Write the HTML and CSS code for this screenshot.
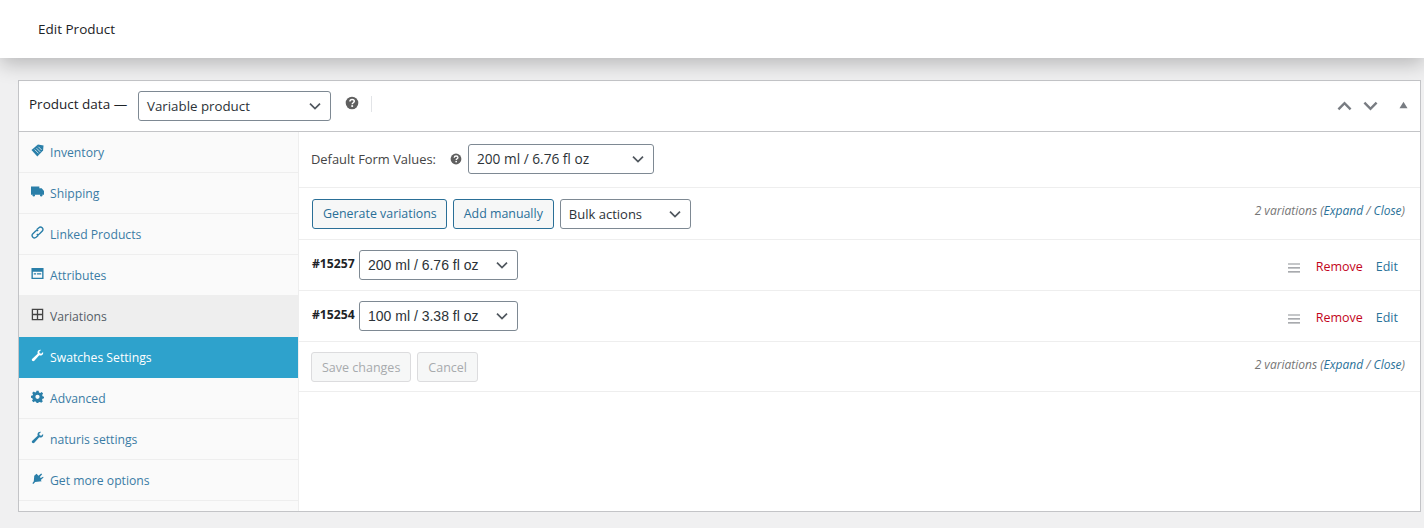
FILE: index.html
```html
<!DOCTYPE html>
<html lang="en">
<head>
<meta charset="utf-8">
<title>Edit Product</title>
<link rel="stylesheet" href="styles.css">
</head>
<body>
<svg class="defs" width="0" height="0" aria-hidden="true">
  <symbol id="chev" viewBox="0 0 14 14"><path d="M2 4.600 7 9.600 12 4.600" fill="none" stroke="currentColor" stroke-width="1.700"/></symbol>
  <symbol id="help" viewBox="0 0 14 14"><circle cx="7" cy="7" r="6.300" fill="#5f5f5f"/><path d="M4.900 5.500C5 4.100 6 3.500 7.100 3.500 8.400 3.500 9.300 4.300 9.300 5.300 9.300 6.700 7.200 6.800 7.200 8.200" fill="none" stroke="#fff" stroke-width="1.500"/><rect x="6.300" y="9.200" width="1.800" height="1.700" fill="#fff"/></symbol>
  <symbol id="wrench" viewBox="0 0 14 14"><path d="M13 3.200C13.500 5 12.600 6.600 11 7 10.200 7.200 9.500 7 8.900 6.800L3.600 12.600C2.900 13.300 1.900 13.200 1.300 12.600.7 12 .7 11 1.400 10.400L7.200 5.100C7 4.500 6.900 3.800 7.100 3 7.500 1.400 9 .5 10.800 1L8.800 3 9.400 4.600 11 5.200Z" fill="currentColor"/></symbol>
</svg>
<header class="topbar"><h1 class="title">Edit Product</h1></header>
<main class="wrap">
  <section class="box">
    <div class="boxhead">
      <span class="boxtitle">Product data —</span>
      <div class="select select-type"><span>Variable product</span><svg class="chev"><use href="#chev"/></svg></div>
      <svg class="help help-top"><use href="#help"/></svg>
      <span class="vline"></span>
      <div class="headctl">
        <svg class="ctl" viewBox="0 0 16 12"><path d="M1.500 9.500 8 3 14.500 9.500" fill="none" stroke="currentColor" stroke-width="2.600"/></svg>
        <svg class="ctl" viewBox="0 0 16 12"><path d="M1.500 2.500 8 9 14.500 2.500" fill="none" stroke="currentColor" stroke-width="2.600"/></svg>
        <svg class="ctl-tri" viewBox="0 0 10 8"><path d="M5 .5 9.500 7.500H.5Z" fill="currentColor"/></svg>
      </div>
    </div>
    <div class="boxbody">
      <nav class="tabs">
        <a class="tab"><svg class="ico" viewBox="0 0 14 14"><path d="M.5 6.500 7.500.5 13.500 1.500 13 7 6.800 13.500Z" fill="currentColor"/><path d="M4 6 8 10M6 4.500 10 8.500M8 3 11.500 6.500" stroke="#fafafa" stroke-width=".8"/></svg><span>Inventory</span></a>
        <a class="tab"><svg class="ico" viewBox="0 0 14 14"><path d="M0 1.500H9V3.500H11.500L14 6.500V10.500H0Z" fill="currentColor"/><circle cx="3" cy="11" r="1.300" fill="currentColor"/><circle cx="11" cy="11" r="1.300" fill="currentColor"/></svg><span>Shipping</span></a>
        <a class="tab"><svg class="ico" viewBox="0 0 14 14"><path d="M6 4 8.500 1.800C9.500 1 11 1 12 2 13 3 13 4.500 12.200 5.500L9 8.700C8 9.500 7 9.400 6.200 8.800M8 10 5.500 12.200C4.500 13 3 13 2 12 1 11 1 9.500 1.800 8.500L5 5.300C6 4.500 7 4.600 7.800 5.200" fill="none" stroke="currentColor" stroke-width="1.500"/></svg><span>Linked Products</span></a>
        <a class="tab"><svg class="ico" viewBox="0 0 14 14"><path fill-rule="evenodd" d="M.5 1H13.500V13H.5ZM2 5V11.500H12V5ZM3 6.800H5.500V8.200H3ZM6.500 6.800H11V8.200H6.500Z" fill="currentColor"/></svg><span>Attributes</span></a>
        <a class="tab tab-plain"><svg class="ico" viewBox="0 0 14 14"><path d="M1.500 1.500H12.500V12.500H1.500ZM7 1.500V12.500M1.500 7H12.500" fill="none" stroke="currentColor" stroke-width="1.400"/></svg><span>Variations</span></a>
        <a class="tab tab-active"><svg class="ico"><use href="#wrench"/></svg><span>Swatches Settings</span></a>
        <a class="tab"><svg class="ico" viewBox="0 0 14 14"><path fill-rule="evenodd" d="M5.800.8H8.200L8.600 2.600 10 3.200 11.500 2.200 13 3.900 12 5.300 12.500 6.800 14 7.200V9L12.400 9.400 11.800 10.800 12.800 12.200 11 13.700 9.600 12.800 8.200 13.200 7.800 14H6L5.600 12.800 4.200 12.200 2.800 13.200 1 11.600 2 10.200 1.500 8.800 0 8.400V6.300L1.600 6 2.200 4.600 1.200 3.200 3 1.700 4.400 2.700 5.600 2.200ZM7 5A2.200 2.200 0 1 0 7 9.600 2.200 2.200 0 1 0 7 5Z" fill="currentColor"/></svg><span>Advanced</span></a>
        <a class="tab"><svg class="ico"><use href="#wrench"/></svg><span>naturis settings</span></a>
        <a class="tab"><svg class="ico" viewBox="0 0 14 14"><path d="M6 2 8 4 11 1.500 12 2.500 9.500 5.500 10.500 6.500 13 5 13.500 6 10.500 8.500 11.500 10 4.500 10.800 2.500 13 1.500 12 3 10 3.500 4Z" fill="currentColor"/></svg><span>Get more options</span></a>
        <div class="tabs-rest"></div>
      </nav>
      <div class="panel">
        <div class="row row-default">
          <span class="label">Default Form Values:</span>
          <svg class="help help-form"><use href="#help"/></svg>
          <div class="select select-form"><span>200 ml / 6.76 fl oz</span><svg class="chev"><use href="#chev"/></svg></div>
        </div>
        <div class="row row-tools">
          <a class="btn btn-blue btn-generate">Generate variations</a>
          <a class="btn btn-blue">Add manually</a>
          <div class="select select-bulk"><span>Bulk actions</span><svg class="chev"><use href="#chev"/></svg></div>
          <span class="count count-top">2 variations (<a>Expand</a> / <a>Close</a>)</span>
        </div>
        <div class="row row-var">
          <strong class="varid">#15257</strong>
          <div class="select select-var"><span>200 ml / 6.76 fl oz</span><svg class="chev"><use href="#chev"/></svg></div>
          <svg class="menu" viewBox="0 0 12 10"><path d="M0 1H12M0 4.900H12M0 8.800H12" stroke="currentColor" stroke-width="1.200"/></svg>
          <a class="remove">Remove</a>
          <a class="edit">Edit</a>
        </div>
        <div class="row row-var">
          <strong class="varid">#15254</strong>
          <div class="select select-var"><span>100 ml / 3.38 fl oz</span><svg class="chev"><use href="#chev"/></svg></div>
          <svg class="menu" viewBox="0 0 12 10"><path d="M0 1H12M0 4.900H12M0 8.800H12" stroke="currentColor" stroke-width="1.200"/></svg>
          <a class="remove">Remove</a>
          <a class="edit">Edit</a>
        </div>
        <div class="row row-save">
          <a class="btn btn-off">Save changes</a>
          <a class="btn btn-off">Cancel</a>
          <span class="count count-bottom">2 variations (<a>Expand</a> / <a>Close</a>)</span>
        </div>
      </div>
    </div>
  </section>
</main>
</body>
</html>
```

FILE: styles.css
```css
* { box-sizing: border-box; }
html, body { margin: 0; height: 528px; overflow: hidden; }
body {
  background: #f0f0f1;
  font-family: "Open Sans", "Noto Sans", sans-serif;
  font-size: 13px;
  color: #3c434a;
}
.defs { position: absolute; }
.topbar {
  height: 58px;
  background: #fff;
  display: flex;
  align-items: center;
  padding-left: 38px;
  box-shadow: 0 6px 20px rgba(0, 0, 0, .24);
  position: relative;
}
.title { margin: 0; font-size: 13.500px; font-weight: 500; color: #1d2327; }
.wrap { padding: 22px 3px 0 18px; }
.box {
  height: 432px;
  background: #fff;
  border: 1px solid #c3c4c7;
  display: flex;
  flex-direction: column;
}
.boxhead {
  height: 51px;
  flex: none;
  display: flex;
  align-items: center;
  padding: 0 12px 1px 10px;
  border-bottom: 1px solid #c3c4c7;
}
.boxtitle { font-size: 13.500px; font-weight: 500; color: #1d2327; margin: -3px 0 0; width: 109px; flex: none; }
.select {
  height: 30px;
  background: #fff;
  border: 1px solid #7e8993;
  border-radius: 3px;
  display: flex;
  align-items: center;
  justify-content: space-between;
  padding: 0 8px;
  color: #2c3338;
  font-size: 14px;
}
.chev { width: 14px; height: 14px; color: #50575e; flex: none; }
.select-type { width: 193px; font-size: 13.300px; font-weight: 500; }
.help { width: 14px; height: 14px; flex: none; }
.help-top { margin: -5px 0 0 14px; }
.vline { width: 1px; height: 16px; background: #e2e4e7; margin: -4px 0 0 12px; }
.headctl { margin-left: auto; display: flex; align-items: center; color: #787c82; }
.ctl { width: 15px; height: 12px; margin-right: 11px; }
.ctl-tri { width: 9px; height: 8px; margin: -2px 0 0 10px; }
.boxbody { flex: 1; display: flex; min-height: 0; }
.tabs {
  width: 279px;
  flex: none;
  background: #fafafa;
  display: flex;
  flex-direction: column;
}
.tab {
  height: 41px;
  flex: none;
  display: flex;
  align-items: center;
  padding: 0 0 0 12px;
  border-bottom: 1px solid #eee;
  color: #3a7ca5;
  font-size: 12.200px;
}
.tab span { margin-left: 6px; }
.ico { width: 13px; height: 13px; margin: -4px 0 0; flex: none; color: #2a7fa9; }
.tab-plain { background: #eee; color: #555d66; border-bottom-color: #eee; }
.tab-plain .ico { color: #444; }
.tab-active { background: #2ea2cc; color: #fff; border-bottom-color: #2ea2cc; }
.tab-active .ico { color: #fff; }
.tabs-rest { flex: 1; }
.panel { flex: 1; min-width: 0; border-left: 1px solid #eee; }
.row { display: flex; align-items: center; border-bottom: 1px solid #eee; padding: 0 15px 0 13px; }
.row-default { height: 56px; padding: 0 15px 2px 12px; }
.label { font-size: 12.900px; color: #444; }
.help-form { width: 12px; height: 12px; margin: 0 0 0 14px; }
.select-form { width: 186px; margin-left: 6px; font-size: 13.700px; }
.row-tools { height: 52px; }
.btn {
  height: 30px;
  display: flex;
  align-items: center;
  border-radius: 3px;
  padding: 0 10px;
  font-size: 12.400px;
  margin-right: 6px;
}
.btn-generate { padding-right: 9px; }
.btn-blue { border: 1px solid #2a6f97; background: #f6f7f7; color: #2a6f97; }
.select-bulk { width: 131px; font-size: 13px; }
.count { margin-left: auto; font-style: italic; font-size: 12px; color: #767676; }
.count a { color: #2a7299; }
.count-top { margin-top: -7px; }
.count-bottom { margin-top: -5px; }
.row-var { height: 51px; }
.varid { font-size: 12.200px; font-weight: 700; color: #1d2327; margin-top: -4px; width: 47px; flex: none; }
.select-var { width: 159px; font-family: "Liberation Sans", Arial, sans-serif; font-size: 14px; }
.menu { width: 12px; height: 10px; margin: 6px 0 0 auto; color: #8c8f94; }
.remove { color: #c3051c; font-size: 12.500px; margin: 2px 0 0 16px; }
.edit { color: #2a7299; font-size: 12.500px; margin: 2px 7px 0 13px; }
.row-save { height: 50px; padding-left: 12px; }
.btn-off { border: 1px solid #dcdcde; background: #f6f7f7; color: #a7aaad; margin-right: 6px; padding: 2px 10px 0; font-size: 12.500px; }
```
